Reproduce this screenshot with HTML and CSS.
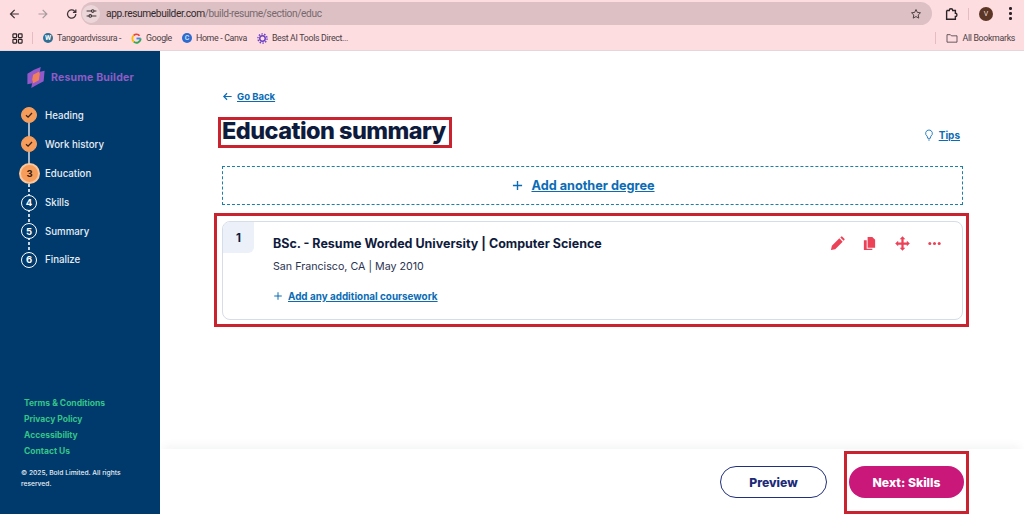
FILE: index.html
```html
<!DOCTYPE html>
<html lang="en">
<head>
<meta charset="utf-8">
<title>Education summary</title>
<link rel="stylesheet" href="styles.css">
</head>
<body>
<div class="browser">
  <div class="toolbar">
    <div class="nav-btns">
      <svg class="nav-icon" viewBox="0 0 16 16"><path d="M13 8H3.500M8 3 3 8l5 5"/></svg>
      <svg class="nav-icon dim" viewBox="0 0 16 16"><path d="M3 8h9.500M8 3l5 5-5 5"/></svg>
      <svg class="nav-icon" viewBox="0 0 16 16"><path d="M13 8a5 5 0 1 1-1.500-3.500L13 6M13 2.500V6H9.500"/></svg>
    </div>
    <div class="omnibox">
      <span class="site-chip"><svg viewBox="0 0 16 16" class="tune"><path d="M2 5h6M11 5h3M2 11h3M8 11h6"/><circle cx="9.500" cy="5" r="1.600"/><circle cx="6.500" cy="11" r="1.600"/></svg></span>
      <span class="url"><span class="url-host">app.resumebuilder.com</span>/build-resume/section/educ</span>
      <svg class="star" viewBox="0 0 16 16"><path d="m8 2 1.800 3.900 4.200.5-3.100 2.900.8 4.200L8 11.400l-3.700 2.100.8-4.200L2 6.400l4.200-.5z"/></svg>
    </div>
    <svg class="ext" viewBox="0 0 16 16"><path d="M3 4h3a2 2 0 0 1 4 0h3v3.200a1.800 1.800 0 0 1 0 3.600V14H3v-2.500M3 4v7.500"/></svg>
    <span class="divider"></span>
    <span class="avatar">V</span>
    <span class="kebab"><i></i><i></i><i></i></span>
  </div>
  <div class="bookmarks">
    <svg class="apps" viewBox="0 0 12 12"><rect x="1" y="1" width="4" height="4" rx=".6"/><rect x="7" y="1" width="4" height="4" rx=".6"/><rect x="1" y="7" width="4" height="4" rx=".6"/><rect x="7" y="7" width="4" height="4" rx=".6"/></svg>
    <span class="divider short"></span>
    <span class="bm"><span class="fav fav-wp">W</span>Tangoardvissura -</span>
    <span class="bm"><svg class="fav-svg" viewBox="0 0 12 12" fill="none" stroke-width="2"><path d="M10.500 6H6" stroke="#4285f4"/><path d="M10.500 6A4.500 4.500 0 0 1 3 9.400" stroke="#34a853"/><path d="M3 9.400A4.500 4.500 0 0 1 3 2.600" stroke="#fbbc05"/><path d="M3 2.600A4.500 4.500 0 0 1 9.300 3" stroke="#ea4335"/></svg>Google</span>
    <span class="bm"><span class="fav fav-c">C</span>Home - Canva</span>
    <span class="bm"><svg class="fav-svg" viewBox="0 0 12 12"><circle cx="6" cy="6" r="3" fill="none" stroke="#6a3fc4" stroke-width="1.600"/><circle cx="6" cy="6" r="5" fill="none" stroke="#6a3fc4" stroke-width="1.500" stroke-dasharray="1.600 1.500"/></svg>Best AI Tools Direct...</span>
    <span class="bm-spacer"></span>
    <span class="divider short"></span>
    <span class="bm all"><svg class="folder" viewBox="0 0 14 12"><path d="M1 2h4l1.300 1.400H13V11H1z"/></svg>All Bookmarks</span>
  </div>
</div>

<div class="app">
  <aside class="sidebar">
    <div class="logo">
      <svg class="logo-mark" viewBox="0 0 18 22"><path d="M0 7 7 3l7-3-1 5 5-1-1 11-6 3-7 4 1-5-5 1z" fill="#9558c8"/><path d="M6 8l6-3 1 2-1 7-6 3-1-4z" fill="#f0805a"/></svg>
      <span class="logo-text">Resume Builder</span>
    </div>
    <ol class="steps">
      <li class="step done line-solid"><span class="dot"><svg viewBox="0 0 12 12"><path d="m3 6.200 2.100 2L9 4"/></svg></span>Heading</li>
      <li class="step done tall line-solid"><span class="dot"><svg viewBox="0 0 12 12"><path d="m3 6.200 2.100 2L9 4"/></svg></span>Work history</li>
      <li class="step current line-dash"><span class="dot">3</span>Education</li>
      <li class="step line-dash"><span class="dot">4</span>Skills</li>
      <li class="step line-dash"><span class="dot">5</span>Summary</li>
      <li class="step last"><span class="dot">6</span>Finalize</li>
    </ol>
    <nav class="side-links">
      <a>Terms &amp; Conditions</a>
      <a>Privacy Policy</a>
      <a>Accessibility</a>
      <a>Contact Us</a>
    </nav>
    <p class="copyright">© 2025, Bold Limited. All rights reserved.</p>
  </aside>

  <main class="main">
    <div class="content">
      <a class="back"><svg viewBox="0 0 12 12"><path d="M10.500 6H2M5.500 2.500 2 6l3.500 3.500"/></svg><span>Go Back</span></a>
      <div class="head-row">
        <h1 class="title">Education summary</h1>
        <a class="tips"><svg viewBox="0 0 12 14"><path d="M6 1a4 4 0 0 0-2.300 7.300L4.500 11h3l.8-2.700A4 4 0 0 0 6 1zM5 13h2"/></svg><span>Tips</span></a>
      </div>
      <a class="add-degree"><svg viewBox="0 0 12 12"><path d="M6 1v10M1 6h10"/></svg><span>Add another degree</span></a>
      <section class="card">
        <span class="num">1</span>
        <div class="card-body">
          <div class="card-text">
            <h2 class="degree">BSc. - Resume Worded University | Computer Science</h2>
            <p class="place">San Francisco, CA | May 2010</p>
            <a class="coursework"><svg viewBox="0 0 12 12"><path d="M6 1.500v9M1.500 6h9"/></svg><span>Add any additional coursework</span></a>
          </div>
          <div class="actions">
            <svg viewBox="0 0 16 16"><path d="M1 15l1-4.500 8-8 3.500 3.500-8 8zM11 1.500l.8-.8a1 1 0 0 1 1.400 0l2.100 2.100a1 1 0 0 1 0 1.400l-.8.8z"/></svg>
            <svg viewBox="0 0 16 16"><path d="M6 1h5l3 3v8.500H6z"/><path d="M2 4.500h3v9h6V15H2z"/></svg>
            <svg viewBox="0 0 16 16"><path d="M8 .2 11 3.400H9.200v3.400h3.400V5l3.200 3-3.200 3V9.200H9.200v3.400H11L8 15.800l-3-3.200h1.800V9.200H3.400V11L.2 8l3.200-3v1.800h3.400V3.400H5z"/></svg>
            <svg viewBox="0 0 16 16"><circle cx="3" cy="8" r="1.600"/><circle cx="8" cy="8" r="1.600"/><circle cx="13" cy="8" r="1.600"/></svg>
          </div>
        </div>
      </section>
    </div>
    <footer class="footer">
      <button class="btn btn-outline">Preview</button>
      <button class="btn btn-primary">Next: Skills</button>
    </footer>
    <span class="mark mark-title"></span>
    <span class="mark mark-card"></span>
    <span class="mark mark-next"></span>
  </main>
</div>
</body>
</html>
```
FILE: styles.css
```css
* { box-sizing: border-box; }
html, body { margin: 0; height: 100%; overflow: hidden; }
body { font-family: "Inter", "Liberation Sans", sans-serif; background: #fff; color: #0f1b3d; display: flex; flex-direction: column; height: 514px; }
p, h1, h2, ol { margin: 0; padding: 0; }
a { cursor: pointer; }

.browser { height: 51px; background: #fedde1; border-bottom: 1px solid #e6d5da; flex: none; font-family: "Roboto", sans-serif; }
.toolbar { height: 26px; display: flex; align-items: center; padding: 1px 0 0 8px; }
.nav-btns { display: flex; gap: 15px; width: 70px; flex: none; }
.nav-icon { width: 14px; height: 14px; fill: none; stroke: #3d3336; stroke-width: 1.500; }
.nav-icon.dim { stroke: #a89a9e; }
.omnibox { width: 851px; height: 23px; margin-left: 3px; flex: none; background: #dcc0c4; border-radius: 12px; display: flex; align-items: center; padding: 0 10px 0 0; font-size: 10.200px; letter-spacing: -.38px; color: #77696d; }
.site-chip { width: 18px; height: 18px; margin: 0 6px 0 1px; border-radius: 50%; background: #ecd6d9; display: flex; align-items: center; justify-content: center; flex: none; }
.tune { width: 13px; height: 13px; fill: none; stroke: #3d3336; stroke-width: 1.300; }
.url { flex: 1; white-space: nowrap; }
.url-host { color: #33292c; }
.star { width: 12px; height: 12px; fill: none; stroke: #4a3e41; stroke-width: 1.300; }
.ext { width: 14px; height: 14px; fill: none; stroke: #2c2326; stroke-width: 1.600; flex: none; margin-left: 12px; }
.divider { width: 1px; height: 12px; background: #e6bcc3; margin: 0 10px; flex: none; }
.avatar { width: 14px; height: 14px; border-radius: 50%; background: #5b3526; color: #f1dfd8; font-size: 7px; display: flex; align-items: center; justify-content: center; flex: none; }
.kebab { display: flex; flex-direction: column; gap: 2.500px; margin-left: 16px; }
.kebab i { display: block; width: 2.500px; height: 2.500px; background: #2c2326; border-radius: 50%; }

.bookmarks { height: 24px; display: flex; align-items: center; padding: 0 9px 0 12px; font-size: 8.800px; letter-spacing: -.32px; color: #4a4043; }
.apps { width: 11px; height: 11px; fill: none; stroke: #2c2326; stroke-width: 1.300; flex: none; }
.bookmarks .divider { margin: 0 10px 0 9px; }
.bm { display: flex; align-items: center; gap: 4px; margin-right: 10px; white-space: nowrap; }
.bm-spacer { flex: 1; }
.bm.all { margin-right: 0; }
.fav { width: 10px; height: 10px; border-radius: 50%; display: flex; align-items: center; justify-content: center; font-size: 7px; font-weight: 700; letter-spacing: 0; flex: none; }
.fav-wp { background: #2f6f93; color: #fff; }
.fav-c { background: #2f6ad0; color: #bfe3f5; }
.fav-svg { width: 11px; height: 11px; flex: none; }
.folder { width: 12px; height: 10px; fill: none; stroke: #4a4043; stroke-width: 1; margin-right: 1px; }

.app { flex: 1; display: flex; min-height: 0; }
.sidebar { width: 160px; flex: none; background: #003a6c; color: #e6edf5; display: flex; flex-direction: column; padding: 15px 0 0 19px; }
.logo { display: flex; align-items: center; gap: 6px; height: 22px; margin-left: 8px; }
.logo-mark { width: 18px; height: 21px; flex: none; }
.logo-text { color: #8e5cc4; font-weight: 700; font-size: 10.500px; letter-spacing: .2px; white-space: nowrap; }

.steps { list-style: none; margin-top: 13px; }
.step { position: relative; display: flex; align-items: center; gap: 8px; height: 28.500px; font-size: 9.700px; white-space: nowrap; font-weight: 500; }
.step.tall, .step.current { height: 29.500px; }
.dot { width: 16px; height: 16px; margin-left: 2px; border-radius: 50%; border: 1.500px solid #fff; display: flex; align-items: center; justify-content: center; font-size: 9.500px; font-weight: 700; color: #fff; position: relative; z-index: 1; flex: none; background: #003a6c; }
.dot svg { width: 12px; height: 12px; fill: none; stroke: #3a2317; stroke-width: 1.300; }
.done .dot { background: #f79d5c; border-color: #f79d5c; }
.current .dot { width: 21px; height: 21px; margin-left: 0; margin-right: -3px; background: #f79d5c; border: 2px solid #fbc79c; color: #3a1c0c; }
.line-solid::after, .line-dash::after { content: ""; position: absolute; left: 9px; top: 20px; height: 16px; width: 2px; }
.line-solid::after { background: #a9b6c6; }
.line-dash::after { background: repeating-linear-gradient(#c7d3df 0 3px, transparent 3px 5px); }

.side-links { margin-top: auto; display: flex; flex-direction: column; gap: 5px; padding-left: 5px; }
.side-links a { color: #35c488; font-size: 8.500px; font-weight: 700; line-height: 11px; white-space: nowrap; }
.copyright { font-size: 6.700px; line-height: 11px; margin: 11px 0 24px 2px; width: 105px; color: #e6edf5; font-weight: 500; }

.main { flex: 1; position: relative; display: flex; flex-direction: column; min-width: 0; }
.content { flex: 1; padding: 38px 61px 0 62px; }
.back { display: flex; align-items: center; gap: 4px; height: 14px; color: #0b6cb5; font-size: 9.500px; font-weight: 700; }
.back svg { width: 11px; height: 11px; fill: none; stroke: #0b6cb5; stroke-width: 1.300; }
.back span, .tips span, .add-degree span, .coursework span { text-decoration: underline; }
.head-row { display: flex; align-items: center; justify-content: space-between; height: 30px; margin-top: 12px; }
.title { font-size: 23.500px; font-weight: 800; letter-spacing: -.55px; color: #0f1b3d; white-space: nowrap; }
.tips { display: flex; align-items: center; gap: 5px; color: #0b6cb5; font-size: 10px; font-weight: 700; margin: 10px 3px 0 0; }
.tips svg { width: 10px; height: 12px; fill: none; stroke: #0b6cb5; stroke-width: 1; }
.add-degree { margin-top: 21px; height: 39px; border: 1px dashed #1c7fa8; display: flex; align-items: center; justify-content: center; gap: 8px; padding-right: 18px; color: #0b6cb5; font-size: 12.700px; font-weight: 700; }
.add-degree svg { width: 11px; height: 11px; fill: none; stroke: #0b6cb5; stroke-width: 1.500; }
.card { margin-top: 16px; height: 99px; border: 1px solid #d5dde8; border-radius: 8px; display: flex; overflow: hidden; }
.num { width: 31px; height: 31px; background: #ebf0f9; border-bottom-right-radius: 6px; display: flex; align-items: center; justify-content: center; font-size: 11.500px; font-weight: 700; color: #0f1b3d; flex: none; }
.card-body { flex: 1; display: flex; justify-content: space-between; padding: 14px 20px 0 19px; }
.degree { font-size: 12.500px; line-height: 16px; font-weight: 700; color: #0f1b3d; white-space: nowrap; }
.place { font-size: 10.700px; line-height: 14px; margin-top: 8px; color: #2a3350; white-space: nowrap; }
.coursework { display: flex; align-items: center; gap: 5px; margin-top: 15px; height: 14px; color: #0b6cb5; font-size: 9.900px; font-weight: 700; white-space: nowrap; }
.coursework svg { width: 10px; height: 10px; fill: none; stroke: #0b6cb5; stroke-width: 1.200; }
.actions { display: flex; gap: 17.500px; }
.actions svg { width: 15px; height: 15px; fill: #ec4156; }

.footer { height: 65px; flex: none; display: flex; justify-content: flex-end; align-items: flex-start; gap: 22px; padding: 17px 60px 0 0; box-shadow: 0 -6px 10px -4px rgba(20, 30, 50, .06); }
.btn { height: 32px; border-radius: 16px; font-family: inherit; font-size: 12.200px; font-weight: 800; display: flex; align-items: center; justify-content: center; }
.btn-outline { width: 107px; background: #fff; border: 1.500px solid #22307a; color: #1d2a78; }
.btn-primary { width: 115px; background: #c9177a; border: 0; color: #fff; }

.mark { position: absolute; border: 3px solid #c8232f; pointer-events: none; }
.mark-title { left: 58px; top: 66px; width: 234px; height: 31px; }
.mark-card { left: 54px; top: 162px; width: 755px; height: 114px; }
.mark-next { left: 684px; top: 400px; width: 125px; height: 63px; }
```
